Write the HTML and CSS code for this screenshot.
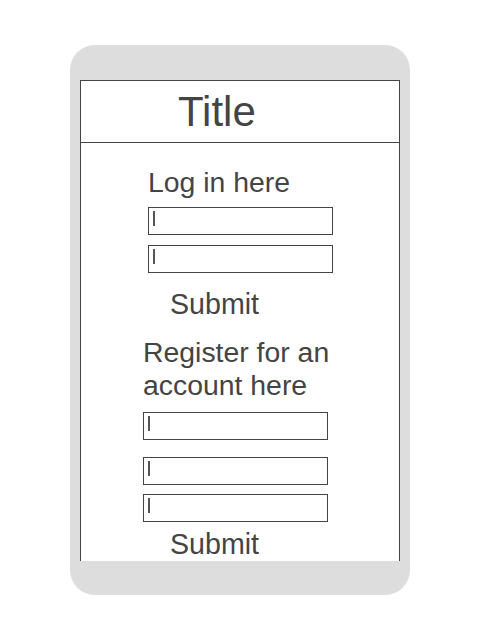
FILE: index.html
```html
<!DOCTYPE html>
<html>
<head>
<meta charset="utf-8">
<link rel="stylesheet" href="styles.css">
</head>
<body>
<div class="phone">
  <div class="screen">
    <header class="header"><h1 class="title">Title</h1></header>
    <section class="login">
      <h2 class="heading">Log in here</h2>
      <div class="field"><span class="caret"></span></div>
      <div class="field gap-login"><span class="caret"></span></div>
      <div class="submit submit-login">Submit</div>
    </section>
    <section class="register">
      <h2 class="heading heading-reg">Register for an account here</h2>
      <div class="field reg1"><span class="caret"></span></div>
      <div class="field reg2"><span class="caret"></span></div>
      <div class="field reg3"><span class="caret"></span></div>
      <div class="submit submit-reg">Submit</div>
    </section>
  </div>
</div>
</body>
</html>
```

FILE: styles.css
```css
* { box-sizing: border-box; }
html, body { margin: 0; padding: 0; background: #fff; }
body { font-family: "Liberation Sans", Arial, sans-serif; color: #444; }

.phone {
  margin: 45px 0 0 70px;
  width: 340px;
  height: 550px;
  background: #dddddd;
  border-radius: 25px;
  padding: 35px 10px 0 10px;
}

.screen {
  width: 320px;
  height: 481px;
  background: #fff;
  border: 1px solid #444;
  border-bottom: none;
  overflow: hidden;
}

.header {
  height: 62px;
  border-bottom: 1px solid #444;
  padding: 8px 0 0 97px;
}
.title {
  margin: 0;
  font-size: 42px;
  font-weight: normal;
  line-height: 46px;
}

.heading {
  margin: 0;
  font-size: 28.4px;
  font-weight: normal;
  line-height: 32px;
}

.login { margin: 23px 0 0 67px; }
.register { margin: 16px 0 0 62px; }
.heading-reg { width: 194px; line-height: 33px; }

.field {
  width: 185px;
  height: 28px;
  border: 1px solid #444;
  padding: 3px 0 0 4px;
  margin-top: 9px;
}
.gap-login { margin-top: 10px; }
.reg1 { margin-top: 10px; }
.reg2 { margin-top: 17px; }
.reg3 { margin-top: 9px; }

.caret {
  display: block;
  width: 2px;
  height: 15px;
  background: #555;
}

.submit {
  font-size: 28.6px;
  line-height: 32px;
  margin-left: 22px;
}
.submit-login { margin-top: 15px; }
.submit-reg { margin-top: 6px; margin-left: 27px; }
```
